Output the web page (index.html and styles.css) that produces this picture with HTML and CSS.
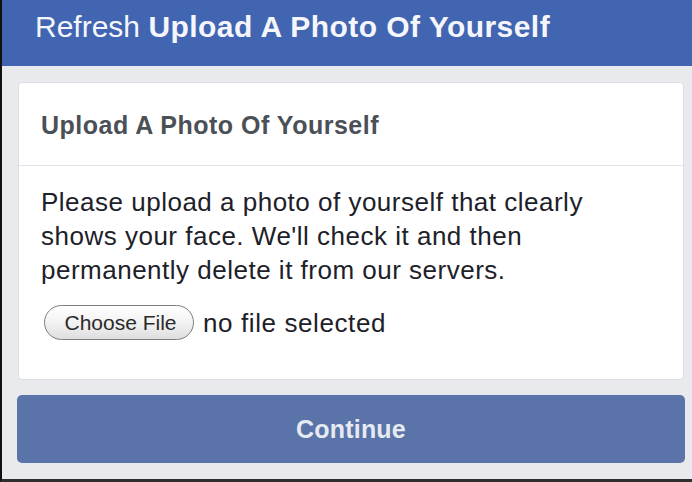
FILE: index.html
```html
<!DOCTYPE html>
<html lang="en">
<head>
<meta charset="utf-8">
<title>Upload A Photo Of Yourself</title>
<link rel="stylesheet" href="styles.css">
</head>
<body>
<div class="frame">
  <header class="topbar">
    <span class="refresh">Refresh</span> <span class="title">Upload A Photo Of Yourself</span>
  </header>
  <main class="content">
    <section class="card">
      <div class="card-head">Upload A Photo Of Yourself</div>
      <div class="card-body">
        <p class="message">Please upload a photo of yourself that clearly shows your face. We'll check it and then permanently delete it from our servers.</p>
        <div class="file-row">
          <button type="button" class="choose">Choose File</button>
          <span class="file-status">no file selected</span>
        </div>
      </div>
    </section>
    <button type="button" class="continue">Continue</button>
  </main>
</div>
</body>
</html>
```
FILE: styles.css
```css
* { box-sizing: border-box; }

html, body {
  margin: 0;
  padding: 0;
}

body {
  font-family: "Liberation Sans", Arial, Helvetica, sans-serif;
  background: #e9eaed;
}

.frame {
  width: 692px;
  height: 482px;
  border-left: 2px solid #111;
  border-bottom: 3px solid #2e2e2e;
  background: #e9eaed;
  display: flex;
  flex-direction: column;
  overflow: hidden;
}

.topbar {
  height: 66px;
  flex: 0 0 66px;
  background: #4165b0;
  color: #f4f6fb;
  font-size: 30px;
  line-height: 36px;
  padding: 9px 0 0 33px;
  white-space: nowrap;
}

.refresh { font-weight: 400; }
.title { font-weight: 700; letter-spacing: 0.45px; }

.content {
  padding: 16px 8px 0 16px;
  display: flex;
  flex-direction: column;
  gap: 15px;
}

.card {
  background: #fff;
  border: 1px solid #dcdee3;
  border-radius: 4px;
}

.card-head {
  padding: 27px 22px 25px;
  font-size: 25px;
  line-height: 30px;
  font-weight: 700;
  letter-spacing: 0.5px;
  color: #4b4f56;
  border-bottom: 1px solid #e2e3e6;
}

.card-body {
  padding: 19px 50px 39px 22px;
}

.message {
  margin: 0;
  font-size: 26px;
  line-height: 34px;
  letter-spacing: 0.5px;
  color: #1d2129;
}

.file-row {
  margin-top: 18px;
  display: flex;
  align-items: center;
  gap: 9px;
  padding-left: 3px;
}

.choose {
  width: 150px;
  height: 35px;
  padding: 0 0 0 3px;
  border: 1px solid #7d7d7d;
  border-radius: 18px;
  background: linear-gradient(#ffffff, #f1f1f1 55%, #dedede);
  font-family: "Liberation Sans", Arial, sans-serif;
  font-size: 21px;
  color: #2a2a2a;
  box-shadow: inset 0 1px 0 #fff;
}

.file-status {
  font-size: 26px;
  line-height: 34px;
  letter-spacing: 0.6px;
  color: #1d2129;
}

.continue {
  height: 68px;
  margin-left: -1px;
  margin-right: -1px;
  border: 0;
  border-radius: 5px;
  background: #5a73a8;
  color: #e6eaf2;
  font-family: "Liberation Sans", Arial, sans-serif;
  font-size: 25px;
  font-weight: 700;
  letter-spacing: 0.2px;
}
```
